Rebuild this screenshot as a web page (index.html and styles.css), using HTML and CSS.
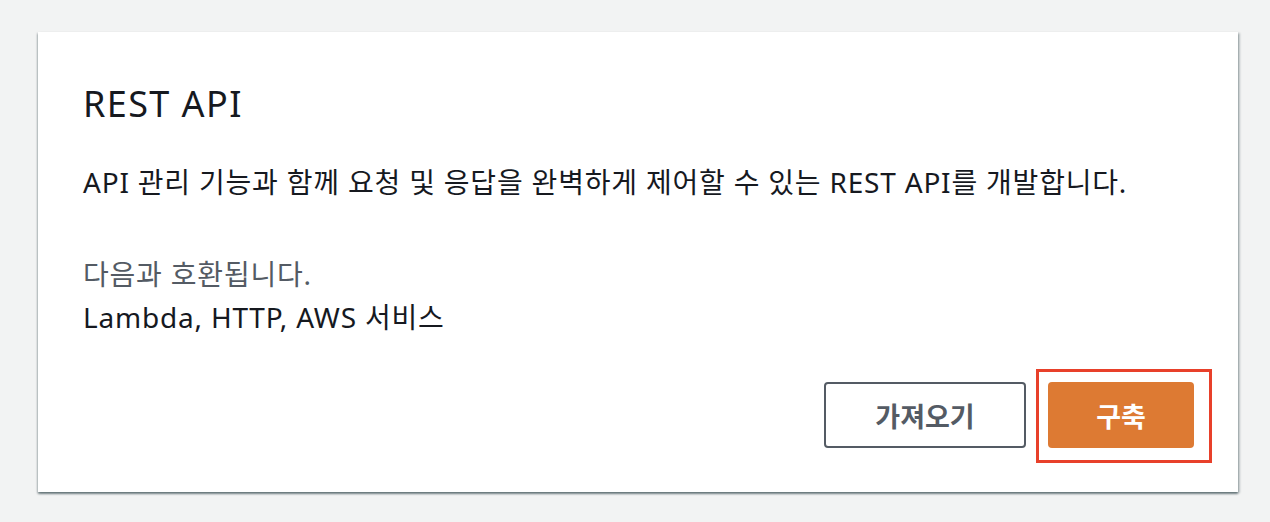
FILE: index.html
```html
<!DOCTYPE html>
<html lang="ko">
<head>
  <meta charset="UTF-8">
  <title>REST API</title>
  <link rel="stylesheet" href="styles.css">
</head>
<body>
  <div class="card">
    <h2 class="card-title">REST API</h2>
    <p class="card-desc">API 관리 기능과 함께 요청 및 응답을 완벽하게 제어할 수 있는 REST API를 개발합니다.</p>

    <div class="compat">
      <div class="compat-label">다음과 호환됩니다.</div>
      <div class="compat-value">Lambda, HTTP, AWS 서비스</div>
    </div>

    <div class="card-actions">
      <button class="btn btn-normal">가져오기</button>
      <span class="highlight">
        <button class="btn btn-primary">구축</button>
      </span>
    </div>
  </div>
</body>
</html>
```

FILE: styles.css
```css
body {
  margin: 0;
  padding: 32px 32px 30px 38px;
  background-color: #f2f3f3;
  font-family: "Noto Sans", "Noto Sans CJK KR", sans-serif;
  color: #16191f;
}

.card {
  width: 1200px;
  height: 460px;
  box-sizing: border-box;
  padding: 50px 44px 44px 45px;
  background: #fff;
  display: flex;
  flex-direction: column;
  box-shadow: 0 2px 2px rgba(0, 28, 36, 0.45), 2px 1px 2px rgba(0, 28, 36, 0.2), -1px 1px 2px rgba(0, 28, 36, 0.15);
}

.card-title {
  margin: 0;
  font-size: 36px;
  line-height: 44px;
  font-weight: 400;
  letter-spacing: 1.4px;
}

.card-desc {
  margin: 38px 0 0;
  font-size: 28px;
  line-height: 36px;
  letter-spacing: 0.8px;
}

.compat {
  margin-top: 56px;
  font-size: 28px;
  line-height: 36px;
  letter-spacing: 0.8px;
  display: flex;
  flex-direction: column;
  gap: 7px;
}

.compat-label {
  color: #545b64;
}

.card-actions {
  margin-top: auto;
  display: flex;
  justify-content: flex-end;
  align-items: center;
  gap: 22px;
}

.btn {
  height: 66px;
  box-sizing: border-box;
  border-radius: 4px;
  font-family: "Noto Sans CJK KR", sans-serif;
  font-size: 27px;
  font-weight: 700;
  cursor: pointer;
}

.btn-normal {
  width: 202px;
  background: #fff;
  color: #545b64;
  border: 2px solid #545b64;
}

.btn-primary {
  display: block;
  width: 146px;
  background: #dd7a33;
  color: #fff;
  border: none;
}

.highlight {
  position: relative;
}

.highlight::after {
  content: "";
  position: absolute;
  left: -12px;
  right: -18px;
  top: -13px;
  bottom: -15px;
  border: 3px solid #e8402a;
}
```
